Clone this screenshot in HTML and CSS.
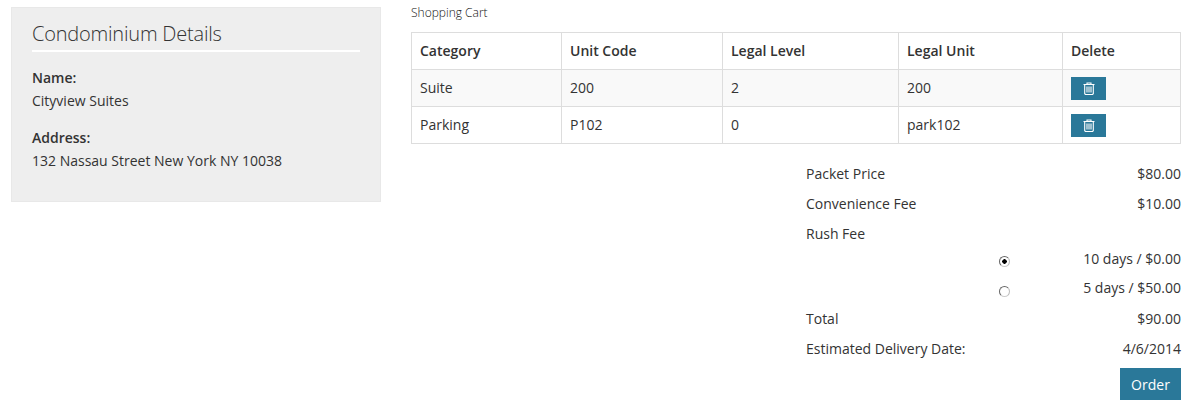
FILE: index.html
```html
<!DOCTYPE html>
<html lang="en">
<head>
    <meta charset="UTF-8" />
    <title>Shopping Cart</title>
    <link rel="stylesheet" href="styles.css">
</head>
<body>
    <div class="page">
        <div class="details">
            <h2>Condominium Details</h2>
            <div class="field">
                <strong>Name:</strong>
                <div>Cityview Suites</div>
            </div>
            <div class="field">
                <strong>Address:</strong>
                <div>132 Nassau Street New York NY 10038</div>
            </div>
        </div>

        <div class="cart">
            <div class="cart-title">Shopping Cart</div>
            <table>
                <colgroup>
                    <col class="col-category">
                    <col class="col-code">
                    <col class="col-level">
                    <col class="col-unit">
                    <col>
                </colgroup>
                <thead>
                    <tr>
                        <th>Category</th>
                        <th>Unit Code</th>
                        <th>Legal Level</th>
                        <th>Legal Unit</th>
                        <th>Delete</th>
                    </tr>
                </thead>
                <tbody>
                    <tr class="odd">
                        <td>Suite</td>
                        <td>200</td>
                        <td>2</td>
                        <td>200</td>
                        <td>
                            <button class="delete-btn" aria-label="Delete">
                                <svg width="12" height="13" viewBox="0 0 12 13"><path d="M4 2V1h4v1M.5 2.5h11M1.7 2.5v9.2l.8.8h7l.8-.8V2.5M4 4.5v6M6 4.5v6M8 4.5v6" fill="none" stroke="#fff" stroke-width="1.1"/></svg>
                            </button>
                        </td>
                    </tr>
                    <tr>
                        <td>Parking</td>
                        <td>P102</td>
                        <td>0</td>
                        <td>park102</td>
                        <td>
                            <button class="delete-btn" aria-label="Delete">
                                <svg width="12" height="13" viewBox="0 0 12 13"><path d="M4 2V1h4v1M.5 2.5h11M1.7 2.5v9.2l.8.8h7l.8-.8V2.5M4 4.5v6M6 4.5v6M8 4.5v6" fill="none" stroke="#fff" stroke-width="1.1"/></svg>
                            </button>
                        </td>
                    </tr>
                </tbody>
            </table>

            <div class="summary">
                <div class="row"><span>Packet Price</span><span>$80.00</span></div>
                <div class="row"><span>Convenience Fee</span><span>$10.00</span></div>
                <div class="row"><span>Rush Fee</span></div>
                <div class="rush">
                    <input type="radio" name="rush" checked>
                    <span>10 days / $0.00</span>
                </div>
                <div class="rush">
                    <input type="radio" name="rush">
                    <span>5 days / $50.00</span>
                </div>
                <div class="row"><span>Total</span><span>$90.00</span></div>
                <div class="row"><span>Estimated Delivery Date:</span><span>4/6/2014</span></div>
                <div class="actions"><button class="order-btn">Order</button></div>
            </div>
        </div>
    </div>
</body>
</html>
```

FILE: styles.css
```css
body {
    font-family: "Open Sans", sans-serif;
    font-size: 14px;
    line-height: 20px;
    color: #333;
    margin: 0;
    padding: 0;
    background-color: #fff;
}

.page {
    display: flex;
    align-items: flex-start;
    gap: 30px;
    padding: 0 13px 0 11px;
}

.details {
    width: 370px;
    height: 195px;
    box-sizing: border-box;
    margin-top: 7px;
    padding: 12px 20px 0 20px;
    background-color: #eee;
    border: 1px solid #e8e8e8;
}

.details h2 {
    margin: 0 0 16px 0;
    padding-bottom: 3px;
    font-size: 20px;
    font-weight: 300;
    line-height: 27px;
    letter-spacing: -0.2px;
    border-bottom: 2px solid #fff;
}

.field {
    margin-bottom: 17px;
}

.field div {
    margin-top: 3px;
}

.field strong {
    font-weight: 600;
}

.cart {
    flex: 1;
}

.cart-title {
    font-size: 12px;
    font-weight: 300;
    line-height: 16px;
    color: #111;
    margin: 5px 0 11px 0;
}

table {
    width: 100%;
    table-layout: fixed;
    border-collapse: collapse;
}

.col-category {
    width: 150px;
}

.col-code {
    width: 161px;
}

.col-level {
    width: 176px;
}

.col-unit {
    width: 164px;
}

th, td {
    height: 36px;
    padding: 0 8px;
    text-align: left;
    border: 1px solid #ddd;
}

th {
    font-weight: 600;
}

tr.odd td {
    background-color: #f9f9f9;
}

.delete-btn {
    display: flex;
    align-items: center;
    justify-content: center;
    width: 35px;
    height: 23px;
    padding: 0;
    border: none;
    background-color: #2a7899;
}

.summary {
    width: 375px;
    margin: 15px 0 0 auto;
}

.row {
    display: flex;
    justify-content: space-between;
    height: 30px;
    align-items: center;
}

.rush {
    display: flex;
    justify-content: space-between;
    align-items: flex-start;
    height: 30px;
    padding-left: 193px;
}

.rush:nth-child(5) {
    margin-top: -1px;
    height: 26px;
}

.rush input {
    appearance: none;
    box-sizing: border-box;
    margin: 7px 0 0 0;
    width: 11px;
    height: 11px;
    border: 1px solid #666;
    border-bottom-color: #ccc;
    border-right-color: #bbb;
    border-radius: 50%;
    background-color: #fff;
}

.rush:nth-child(5) input {
    margin-top: 8px;
}

.rush input:checked {
    background: radial-gradient(circle, #000 2px, #fff 2.5px);
}

.actions {
    display: flex;
    justify-content: flex-end;
    margin-top: 4px;
}

.order-btn {
    width: 61px;
    height: 32px;
    padding: 0;
    border: none;
    background-color: #2a7899;
    color: #fff;
    font-family: "Open Sans", sans-serif;
    font-size: 14px;
}
```
